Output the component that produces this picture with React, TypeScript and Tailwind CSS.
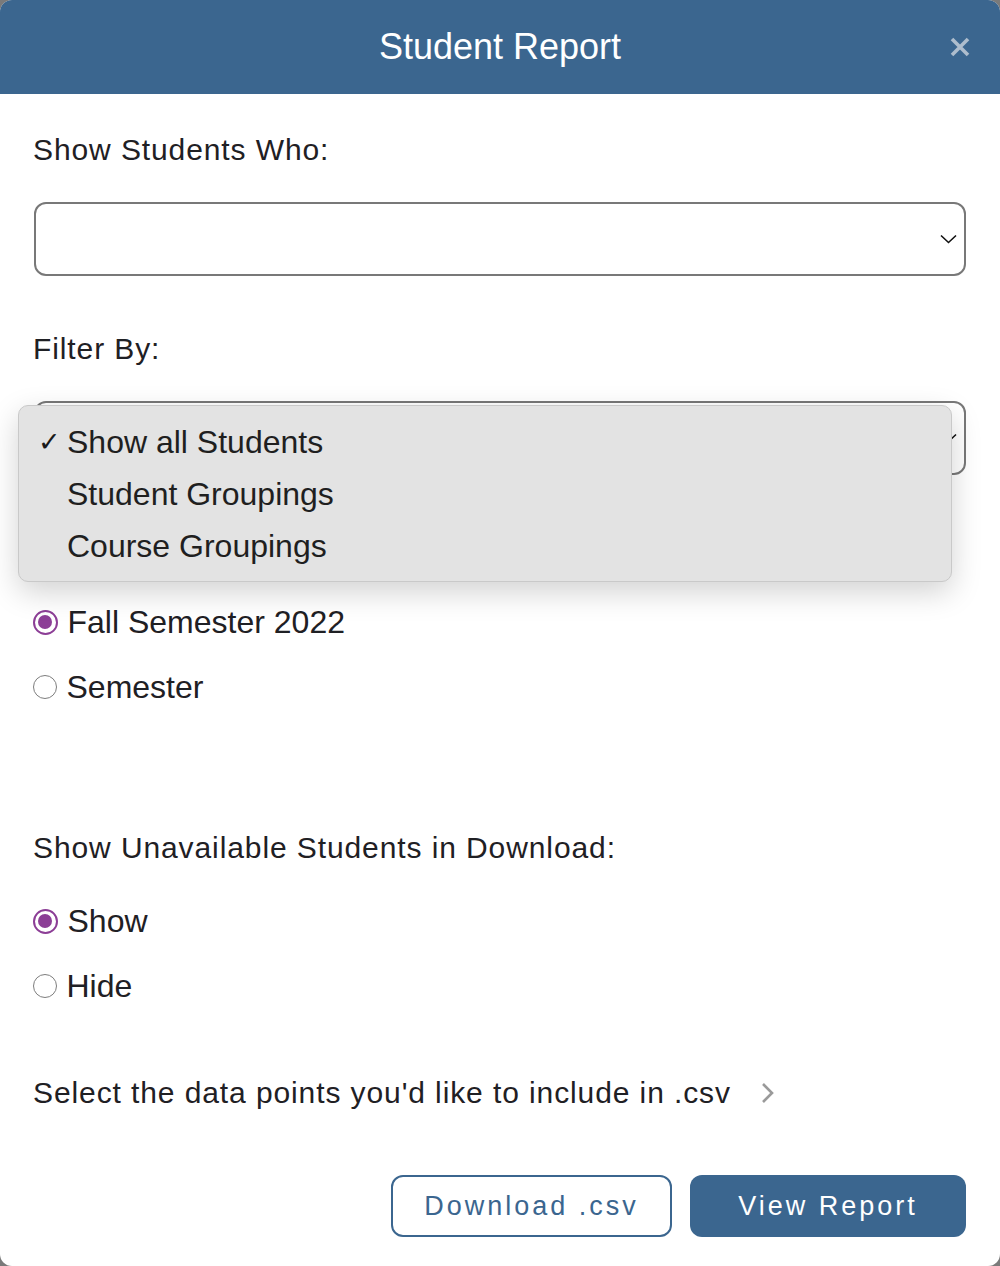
const BLUE = "bg-[#3b668f]";

function Chevron() {
  return (
    <svg width="17" height="10" viewBox="0 0 17 10" fill="none">
      <polyline points="1,1.5 8.5,8.5 16,1.5" stroke="#111" strokeWidth="1.6" />
    </svg>
  );
}

function Radio({ checked, label }: { checked?: boolean; label: string }) {
  return (
    <div className="flex items-center h-[65px] -ml-[1.5px]">
      {checked ? (
        <span className="w-[25px] h-[25px] rounded-full border-[2.5px] border-[#8c3e96] flex items-center justify-center">
          <span className="w-[14px] h-[14px] rounded-full bg-[#8c3e96]" />
        </span>
      ) : (
        <span className="w-[24px] h-[24px] rounded-full border-[1.5px] border-[#7d7d7d]" />
      )}
      <span className="ml-[10px] text-[32px] leading-[36px] text-[#1f2024]">{label}</span>
    </div>
  );
}

function Label({ children }: { children: React.ReactNode }) {
  return <p className="-ml-px text-[30px] leading-[36px] tracking-[0.9px] text-[#1f2024]">{children}</p>;
}

function MenuItem({ label, checked }: { label: string; checked?: boolean }) {
  return (
    <div className="h-[52px] flex items-center">
      <span className="w-[48px] pl-[19px] text-[27px] font-bold text-[#1a1a1a] font-[family-name:'DejaVu_Sans',sans-serif]">
        {checked ? "✓" : ""}
      </span>
      <span className="text-[32px] text-[#1f1f1f]">{label}</span>
    </div>
  );
}

export default function App() {
  return (
    <div className="bg-[#7a7a7a] min-h-screen font-[family-name:'Liberation_Sans',Arial,sans-serif]">
      <div className="w-[1000px] h-[1266px] bg-white rounded-[12px] overflow-hidden flex flex-col">
        <div className={`${BLUE} h-[94px] flex items-center px-[30px] shrink-0`}>
          <div className="w-[20px]" />
          <h1 className="flex-1 text-center text-white text-[36px] leading-none">Student Report</h1>
          <svg width="20" height="20" viewBox="0 0 20 20">
            <path d="M2 2 L18 18 M18 2 L2 18" stroke="#aebdcd" strokeWidth="3.6" strokeLinecap="butt" />
          </svg>
        </div>

        <div className="flex-1 flex flex-col px-[34px] pt-[38px] pb-[29px]">
          <Label>Show Students Who:</Label>
          <div className="mt-[34px] h-[74px] border-[2px] border-[#787878] rounded-[12px] flex items-center justify-end pr-[7px]">
            <Chevron />
          </div>

          <div className="mt-[55px]">
            <Label>Filter By:</Label>
          </div>
          <div className="relative mt-[34px]">
            <div className="h-[74px] border-[2px] border-[#787878] rounded-[12px] flex items-center justify-end pr-[7px]">
              <Chevron />
            </div>
            <div className="absolute left-[-16px] top-[4px] w-[934px] h-[177px] bg-[#e3e3e3] border border-[#c9c9c9] rounded-[10px] shadow-[0_10px_30px_rgba(0,0,0,0.18)] pt-[10px]">
              <MenuItem label="Show all Students" checked />
              <MenuItem label="Student Groupings" />
              <MenuItem label="Course Groupings" />
            </div>
          </div>

          <div className="mt-[114.5px]">
            <Radio checked label="Fall Semester 2022" />
            <Radio label="Semester" />
          </div>

          <div className="mt-[110.5px]">
            <Label>Show Unavailable Students in Download:</Label>
          </div>
          <div className="mt-[22.5px]">
            <Radio checked label="Show" />
            <Radio label="Hide" />
          </div>

          <div className="mt-[56.5px] flex items-center">
            <Label>Select the data points you'd like to include in .csv</Label>
            <svg className="ml-[30px]" width="14" height="22" viewBox="0 0 14 22" fill="none">
              <polyline points="2,2 11,11 2,20" stroke="#9a9a9a" strokeWidth="2.6" />
            </svg>
          </div>

          <div className="mt-auto flex justify-end gap-[18px]">
            <button className="w-[281px] h-[62px] border-[2px] border-[#3b668f] rounded-[12px] text-[#3b668f] text-[27px] tracking-[3px]">
              Download .csv
            </button>
            <button className={`w-[276px] h-[62px] ${BLUE} rounded-[12px] text-white text-[27px] tracking-[3px]`}>
              View Report
            </button>
          </div>
        </div>
      </div>
    </div>
  );
}
